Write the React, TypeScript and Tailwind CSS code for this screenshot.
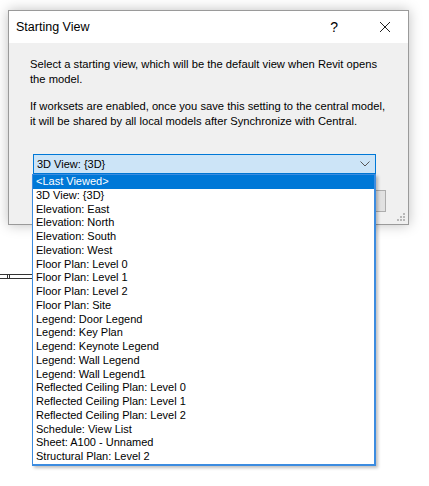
import React from "react";

const views = [
  "<Last Viewed>",
  "3D View: {3D}",
  "Elevation: East",
  "Elevation: North",
  "Elevation: South",
  "Elevation: West",
  "Floor Plan: Level 0",
  "Floor Plan: Level 1",
  "Floor Plan: Level 2",
  "Floor Plan: Site",
  "Legend: Door Legend",
  "Legend: Key Plan",
  "Legend: Keynote Legend",
  "Legend: Wall Legend",
  "Legend: Wall Legend1",
  "Reflected Ceiling Plan: Level 0",
  "Reflected Ceiling Plan: Level 1",
  "Reflected Ceiling Plan: Level 2",
  "Schedule: View List",
  "Sheet: A100 - Unnamed",
  "Structural Plan: Level 2",
];

const ui = { fontFamily: '"Liberation Sans", Arial, sans-serif' };

const App: React.FC = () => {
  return (
    <div className="relative w-[429px] h-[486px] bg-white overflow-hidden text-black" style={ui}>
      {/* bit of drawing behind the dialog */}
      <div className="absolute left-0 top-[274px] w-[33px] h-[5px] border-y border-[#333]" />
      <div className="absolute left-[7px] top-[274px] w-[3px] h-[5px] border-x border-[#333]" />

      <div className="ml-[8px] mt-[10px] w-[401px] h-[215px] border border-[#9a9a9a] bg-[#f0f0f0] shadow-[0_0_12px_rgba(0,0,0,0.25)] flex flex-col">
        <div className="shrink-0 h-[32px] bg-white flex items-center pl-[7px] pr-[16px]">
          <span className="text-[12.5px] flex-1">Starting View</span>
          <span className="text-[14px] mr-[41px]">?</span>
          <svg width="12" height="12" viewBox="0 0 12 12" className="mr-[1px]">
            <path d="M1 1L11 11M11 1L1 11" stroke="#222" strokeWidth="1" />
          </svg>
        </div>
        <div className="relative flex-1 pl-[21px] pr-[10px] pt-[14px] text-[11.2px] leading-[15px] whitespace-nowrap">
          <p>
            Select a starting view, which will be the default view when Revit opens
            <br />
            the model.
          </p>
          <p className="mt-[12px]">
            If worksets are enabled, once you save this setting to the central model,
            <br />
            it will be shared by all local models after Synchronize with Central.
          </p>
          <div className="mt-[25px] ml-[3px] w-[343px] h-[20px] border border-[#0078d7] bg-[#cce4f7] flex items-center pl-[3px] pr-[5px] text-[11px]">
            <span className="flex-1">3D View: {"{3D}"}</span>
            <svg width="10" height="6" viewBox="0 0 10 6">
              <path d="M0.5 0.5L5 5L9.5 0.5" fill="none" stroke="#555" strokeWidth="1" />
            </svg>
          </div>
          <div className="flex justify-end mt-[16px] mr-[12px]">
            <div className="w-[75px] h-[22px] border border-[#adadad] bg-[#e1e1e1]" />
          </div>
          <svg className="absolute right-[2px] bottom-[2px]" width="10" height="10" viewBox="0 0 10 10">
            {[
              [8, 2],
              [8, 5],
              [8, 8],
              [5, 5],
              [5, 8],
              [2, 8],
            ].map(([x, y]) => (
              <rect key={`${x}-${y}`} x={x - 1} y={y - 1} width="2" height="2" fill="#b8b8b8" />
            ))}
          </svg>
        </div>
      </div>

      {/* open dropdown list */}
      <div className="absolute left-[32px] top-[174px] w-[344px] h-[292px] bg-white border border-[#3c8ce0] border-r-2 border-b-2 shadow-[2px_2px_3px_rgba(0,0,0,0.25)] text-[11px]">
        {views.map((v, i) => (
          <div
            key={v}
            className={`h-[13.75px] leading-[13.75px] pl-[3px] whitespace-nowrap ${
              i === 0 ? "bg-[#0078d7] text-white" : ""
            }`}
          >
            {v}
          </div>
        ))}
      </div>
    </div>
  );
};

export default App;
